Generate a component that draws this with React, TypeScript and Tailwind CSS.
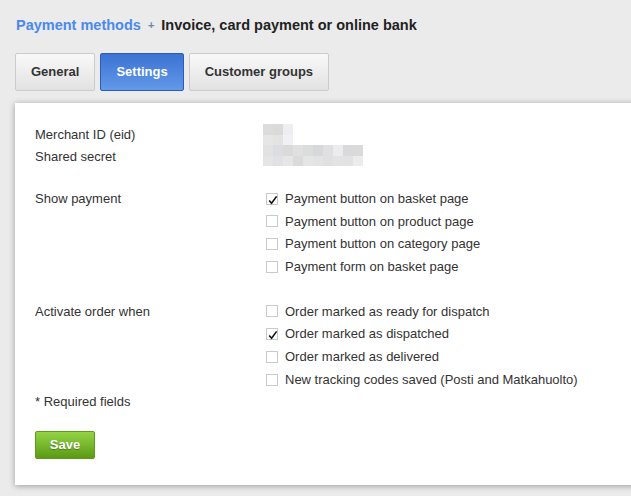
import React from 'react';

const SHOW_PAYMENT = [
  { label: 'Payment button on basket page', checked: true },
  { label: 'Payment button on product page', checked: false },
  { label: 'Payment button on category page', checked: false },
  { label: 'Payment form on basket page', checked: false },
];

const ACTIVATE_ORDER = [
  { label: 'Order marked as ready for dispatch', checked: false },
  { label: 'Order marked as dispatched', checked: true },
  { label: 'Order marked as delivered', checked: false },
  { label: 'New tracking codes saved (Posti and Matkahuolto)', checked: false },
];

// blurred-out secret values, 10px blocks
const BLUR_ROWS: string[][] = [
  ['#dcdcdc', '#dadada', '#eceef1'],
  ['#e6e6e6', '#e3e3e3', '#f1f1f2'],
  ['#e2e2e2', '#dcdde0', '#dadada', '#e0e0e0', '#dcdcdd', '#d6d8db', '#e0e0e0', '#ececee', '#d9d9da', '#dadada'],
  ['#e5e5e5', '#dfe1e5', '#e6e6e6', '#dbdbdb', '#e5e5e7', '#e3e3e4', '#e0e0e0', '#e3e3e3', '#e0e2e4', '#ebecec'],
];

function Checkbox({ checked }: { checked: boolean }) {
  return (
    <span className="relative w-[12px] h-[12px] border border-[#c9c9c9] bg-white shrink-0">
      {checked && (
        <svg viewBox="0 0 12 12" className="absolute left-[0px] top-[0px] w-[12px] h-[12px]">
          <path d="M2.2 6.4 L4.6 9.2 L9.6 2.4" fill="none" stroke="#111" strokeWidth="1.6" />
        </svg>
      )}
    </span>
  );
}

function Row({ label, children }: { label?: string; children?: React.ReactNode }) {
  return (
    <div className="flex h-[22.7px] items-center">
      <div className="w-[231px] shrink-0">{label}</div>
      <div className="flex items-center">{children}</div>
    </div>
  );
}

function CheckGroup({ title, items }: { title: string; items: { label: string; checked: boolean }[] }) {
  return (
    <div>
      {items.map((item, i) => (
        <Row key={item.label} label={i === 0 ? title : undefined}>
          <span className="flex items-center gap-[7px]">
            <Checkbox checked={item.checked} />
            <span>{item.label}</span>
          </span>
        </Row>
      ))}
    </div>
  );
}

export default function App() {
  return (
    <div
      className="w-[631px] h-[496px] overflow-hidden bg-[#ebebeb] text-[#333]"
      style={{ fontFamily: '"Liberation Sans", Arial, sans-serif' }}
    >
      {/* breadcrumb */}
      <div className="flex items-center pl-[16px] pt-[16px] h-[35px] text-[14.5px] font-bold">
        <span className="text-[#4a89ee]">Payment methods</span>
        <span className="mx-[7px] text-[11px] text-[#6f87a8]">+</span>
        <span className="text-[#222]">Invoice, card payment or online bank</span>
      </div>

      {/* tabs */}
      <div className="flex gap-[5px] pl-[15px] mt-[18px]">
        <button className="h-[38px] px-[15px] rounded-[2px] border border-[#cbcbcb] bg-gradient-to-b from-[#f9f9f9] to-[#e2e2e2] text-[13px] font-bold text-[#333]">
          General
        </button>
        <button className="h-[38px] px-[15px] rounded-[2px] border border-[#2c5db6] bg-gradient-to-b from-[#3c72d4] to-[#6399e8] text-[13px] font-bold text-white">
          Settings
        </button>
        <button className="h-[38px] px-[15px] rounded-[2px] border border-[#cbcbcb] bg-gradient-to-b from-[#f9f9f9] to-[#e2e2e2] text-[13px] font-bold text-[#333]">
          Customer groups
        </button>
      </div>

      {/* panel */}
      <div className="ml-[15px] mt-[12px] w-[700px] h-[382px] bg-white shadow-[0_1px_6px_rgba(0,0,0,0.35)] pl-[20px] pt-[20px] text-[13px]">
        <div className="relative">
          <Row label="Merchant ID (eid)" />
          <Row label="Shared secret" />
          <div className="absolute left-[228px] top-[1px] flex flex-col">
            {BLUR_ROWS.map((row, r) => (
              <div key={r} className="flex">
                {row.map((c, i) => (
                  <div key={i} className="w-[10px] h-[10.5px]" style={{ backgroundColor: c }} />
                ))}
              </div>
            ))}
          </div>
        </div>

        <div className="mt-[19px]">
          <CheckGroup title="Show payment" items={SHOW_PAYMENT} />
        </div>

        <div className="mt-[22px]">
          <CheckGroup title="Activate order when" items={ACTIVATE_ORDER} />
          <Row label="* Required fields" />
        </div>

        <button className="mt-[17px] h-[28px] w-[60px] rounded-[2px] border border-[#5e9a1c] bg-gradient-to-b from-[#92d444] to-[#5b9b12] text-[13px] font-bold text-white [text-shadow:0_1px_1px_rgba(0,0,0,0.3)]">
          Save
        </button>
      </div>
    </div>
  );
}
